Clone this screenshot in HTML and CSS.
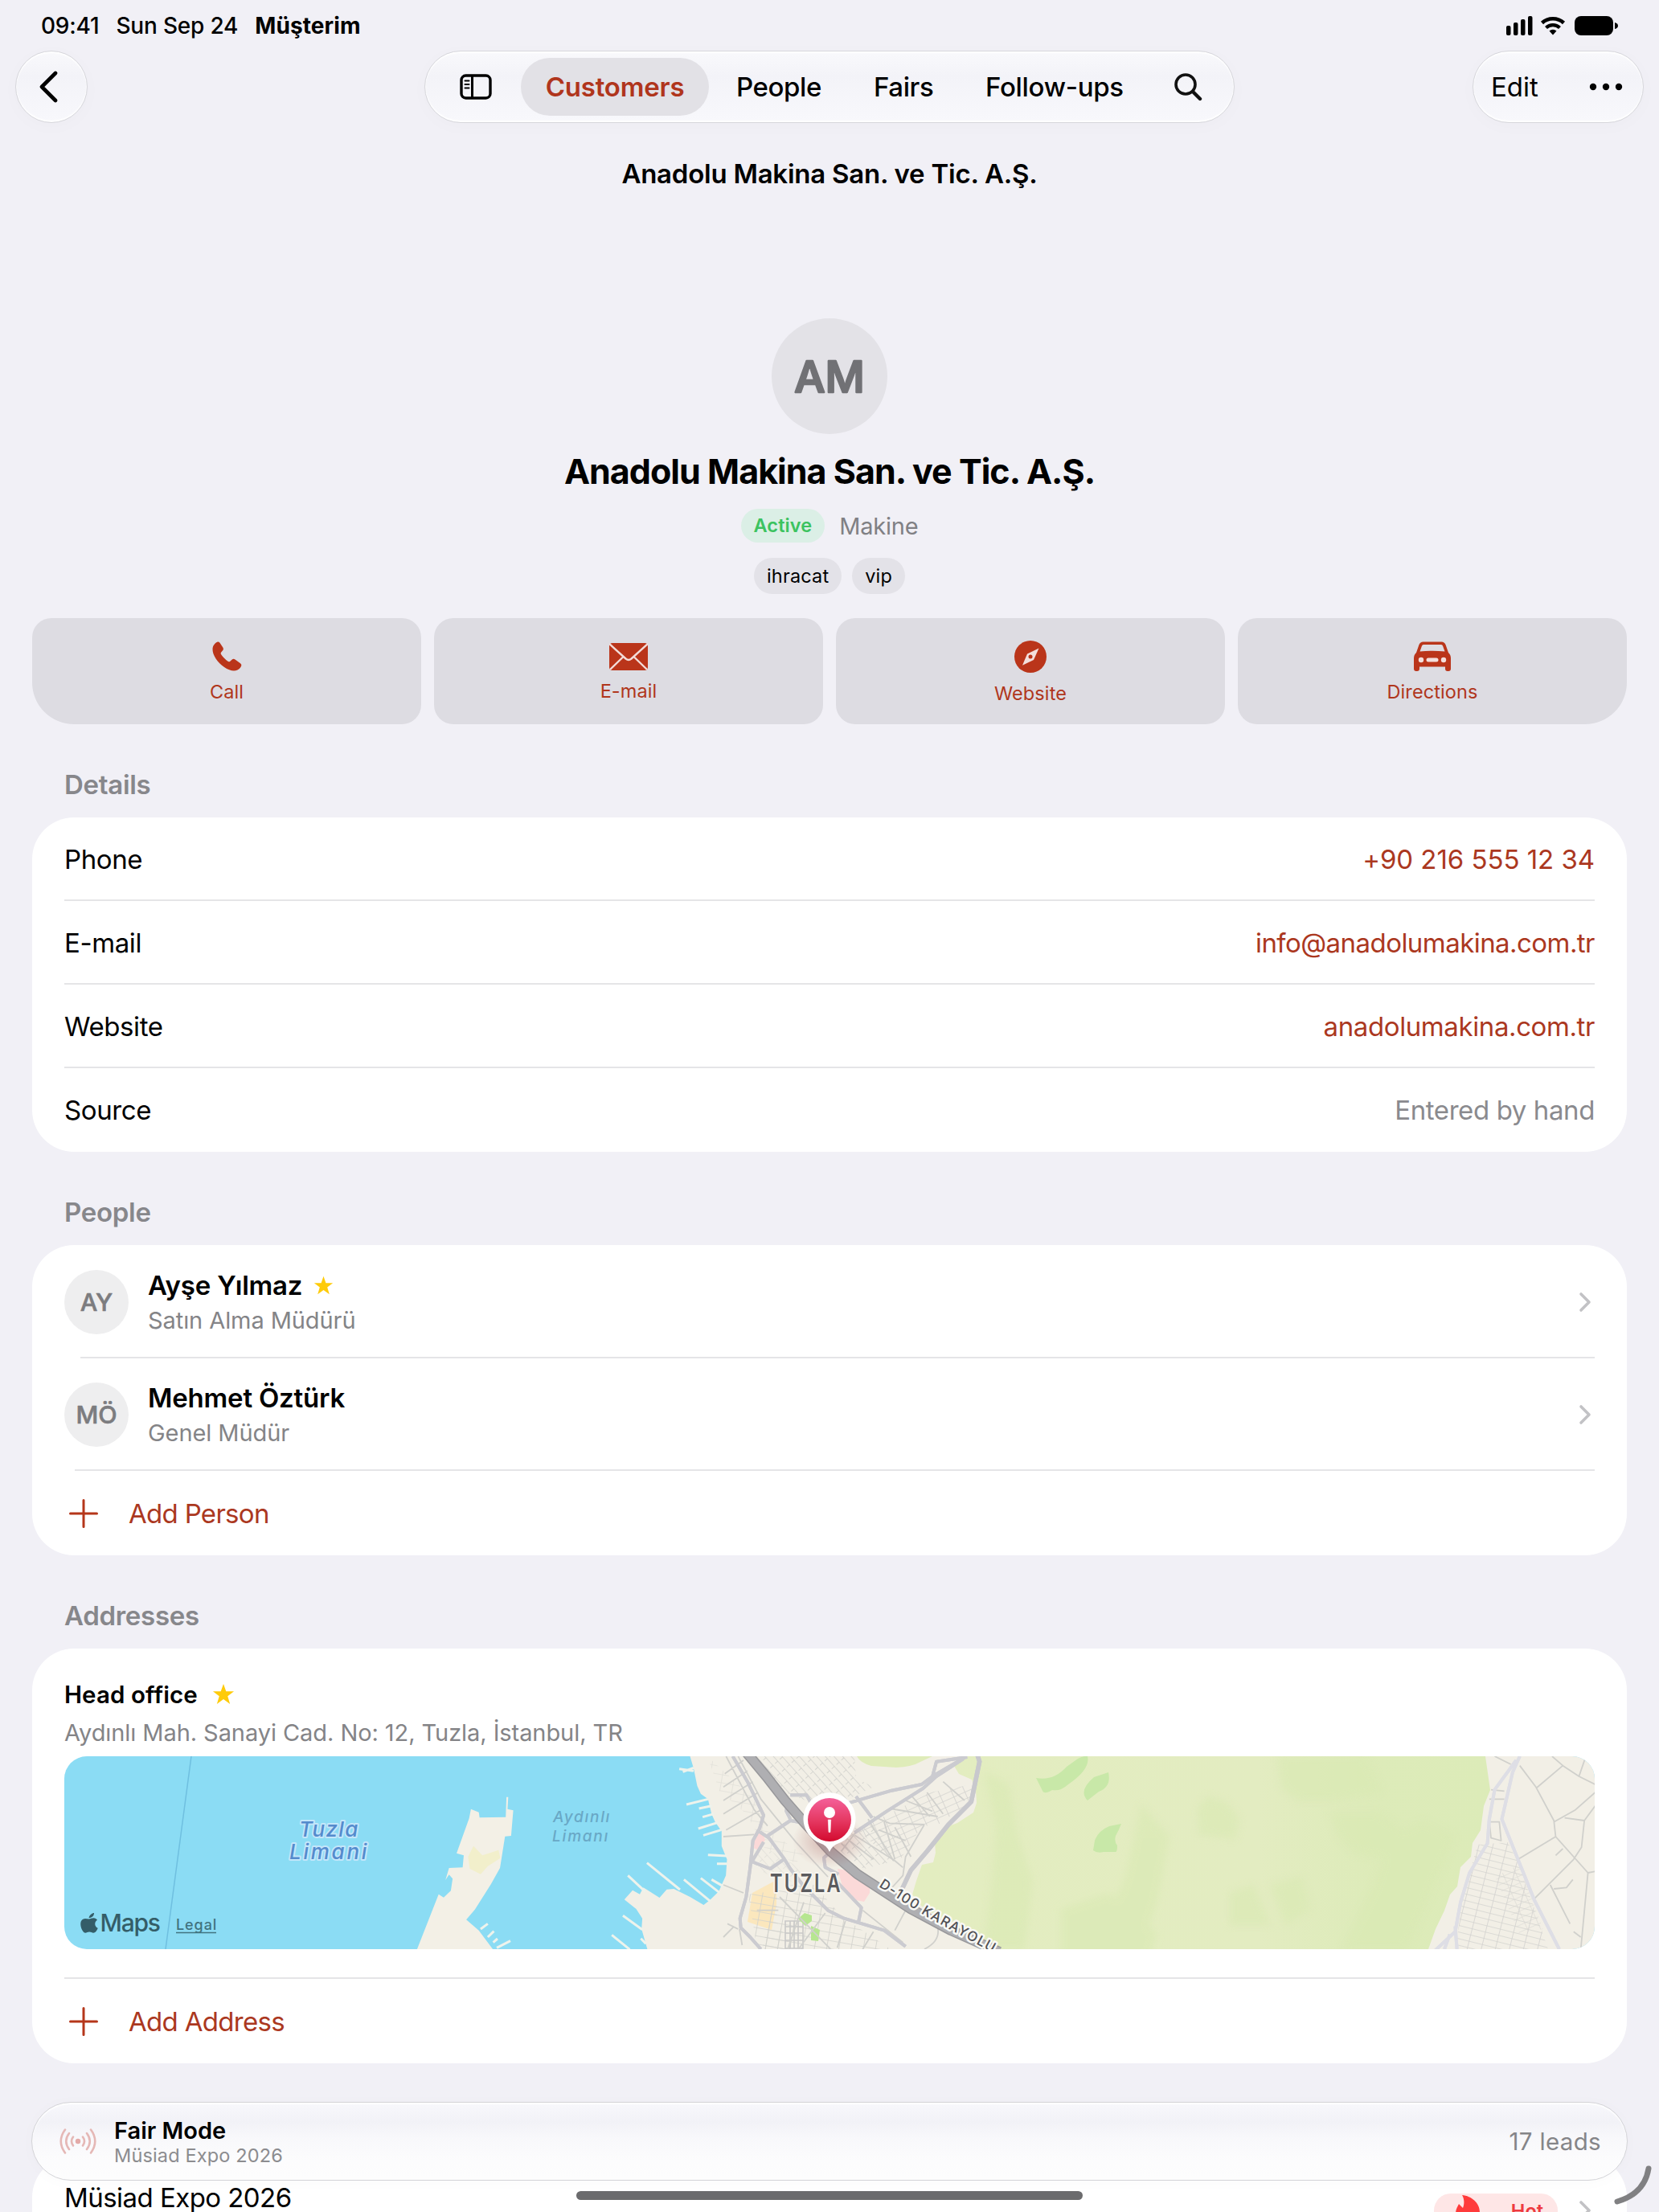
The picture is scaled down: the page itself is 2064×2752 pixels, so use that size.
FILE: index.html
```html
<!DOCTYPE html>
<html lang="en">
<head>
  <meta charset="UTF-8" />
  <meta name="viewport" content="width=device-width, initial-scale=1.0" />
  <title>Müşterim</title>
  <link rel="stylesheet" href="styles.css">
</head>
<body>
<div class="screen">

  <div class="status-bar">
    <span class="time">09:41</span>
    <span class="date">Sun Sep 24</span>
    <span class="app-name">Müşterim</span>
    <svg class="status-icons" width="142" height="26" viewBox="0 0 142 26">
      <rect x="2" y="13" width="5.500" height="12" rx="2"/>
      <rect x="11" y="9" width="5.500" height="16" rx="2"/>
      <rect x="20" y="5" width="5.500" height="20" rx="2"/>
      <rect x="29" y="1" width="5.500" height="24" rx="2"/>
      <path d="M46.500 9.500a20 20 0 0 1 27 0" fill="none" stroke="#000" stroke-width="4.600"/>
      <path d="M51.500 15.500a12.500 12.500 0 0 1 17 0" fill="none" stroke="#000" stroke-width="4.300"/>
      <path d="M60 24.500l-4.500-5a7 7 0 0 1 9 0z"/>
      <rect x="87" y="1" width="48" height="24" rx="8"/>
      <path d="M137 9q4 1 4 4t-4 4z"/>
    </svg>
  </div>

  <div class="nav-bar">
    <button class="glass back-btn">
      <svg width="24" height="40" viewBox="0 0 24 40"><path d="M21 3L4 20l17 17" fill="none" stroke="#000" stroke-width="4.600" stroke-linecap="round" stroke-linejoin="round"/></svg>
    </button>
    <div class="glass tabs">
      <svg class="sidebar-icon" width="40" height="32" viewBox="0 0 40 32">
        <rect x="2" y="2" width="36" height="28" rx="5.500" fill="none" stroke="#000" stroke-width="3.400"/>
        <path d="M15.500 2v28" stroke="#000" stroke-width="3"/>
        <path d="M6.500 8.500h5M6.500 13h5M6.500 17.500h5" stroke="#000" stroke-width="2" stroke-linecap="round"/>
      </svg>
      <span class="tab active-tab">Customers</span>
      <span class="tab tab-people">People</span>
      <span class="tab tab-fairs">Fairs</span>
      <span class="tab tab-follow">Follow-ups</span>
      <svg class="search-icon" width="36" height="36" viewBox="0 0 36 36">
        <circle cx="15" cy="15" r="12" fill="none" stroke="#111" stroke-width="3.600"/>
        <path d="M24 24l9 9" stroke="#111" stroke-width="4.400" stroke-linecap="round"/>
      </svg>
    </div>
    <div class="glass tools">
      <span class="edit">Edit</span>
      <svg width="42" height="10" viewBox="0 0 42 10"><circle cx="5" cy="5" r="4.200"/><circle cx="21" cy="5" r="4.200"/><circle cx="37" cy="5" r="4.200"/></svg>
    </div>
  </div>

  <div class="page-title">Anadolu Makina San. ve Tic. A.Ş.</div>

  <div class="hero">
    <svg class="avatar-big" viewBox="0 0 144 144"><text x="72" y="92" text-anchor="middle">AM</text></svg>
    <h1>Anadolu Makina San. ve Tic. A.Ş.</h1>
    <div class="meta"><span class="badge">Active</span><span class="industry">Makine</span></div>
    <div class="tags"><span class="tag">ihracat</span><span class="tag">vip</span></div>
  </div>

  <div class="actions">
    <div class="action">
      <svg width="48" height="42" viewBox="0 0 48 42"><path d="M13 2.500c-2 .2-6 3.500-6.500 8.500C6 19 13 28.500 21 34c6 4 12 6 16.500 3.500 3-1.500 4.500-4 4.800-5.500.2-1-.3-2-1.300-2.800l-6.500-4.700c-1.500-1-2.800-.8-4 .3l-2.200 2c-.8.7-1.500.7-2.300.2-3-1.800-7.500-6.300-9-9-.5-.9-.4-1.600.2-2.400l1.900-2.300c1-1.200 1-2.600.2-3.900L15.500 3.800c-.7-1-1.500-1.400-2.500-1.300z"/></svg>
      <span>Call</span>
    </div>
    <div class="action mail">
      <svg width="48" height="42" viewBox="0 0 48 42">
        <rect x="0" y="4" width="48" height="34" rx="4"/>
        <path d="M0 5l20.500 18.500q3.500 3 7 0L48 5M1 37l16.500-16M47 37L30.500 21" fill="none" stroke="#f3dcd8" stroke-width="2.400"/>
      </svg>
      <span>E-mail</span>
    </div>
    <div class="action web">
      <svg width="48" height="42" viewBox="0 0 48 42">
        <circle cx="24" cy="21" r="20"/>
        <path d="M34.500 10.500L28 25l-14 6.800L20 17.500z" fill="#f3dfdc"/>
        <circle cx="24" cy="21" r="2.500"/>
      </svg>
      <span>Website</span>
    </div>
    <div class="action">
      <svg width="48" height="42" viewBox="0 0 48 42">
        <path d="M12.500 2.500h23q3.500 0 5 3.500l3.500 10q3 2.500 3 7V36q0 3-3 3h-1q-3 0-3-3v-2.500H8V36q0 3-3 3H4q-3 0-3-3V23q0-4.500 3-7l3.500-10q1.500-3.500 5-3.500z"/>
        <path d="M13 6h22q1.500 0 2 1.500l2.500 7q-15-1.500-31 0l2.500-7Q11.500 6 13 6z" fill="#dfdde3"/>
        <circle cx="10" cy="25" r="3.200" fill="#f3dfdc"/><circle cx="38" cy="25" r="3.200" fill="#f3dfdc"/>
        <rect x="16.500" y="22.500" width="15" height="5" rx="2.500" fill="#f3dfdc"/>
      </svg>
      <span>Directions</span>
    </div>
  </div>

  <h2>Details</h2>
  <div class="card">
    <div class="row"><span>Phone</span><span class="link phone">+90 216 555 12 34</span></div>
    <div class="row"><span>E-mail</span><span class="link email">info@anadolumakina.com.tr</span></div>
    <div class="row"><span>Website</span><span class="link">anadolumakina.com.tr</span></div>
    <div class="row"><span>Source</span><span class="muted">Entered by hand</span></div>
  </div>

  <h2>People</h2>
  <div class="card">
    <div class="row person sep-100">
      <svg class="avatar" viewBox="0 0 80 80"><text x="40" y="51" text-anchor="middle">AY</text></svg>
      <div class="person-text">
        <div class="person-name">Ayşe Yılmaz
          <svg class="star" width="25" height="25" viewBox="0 0 24 24"><path d="M12 .8l2.800 8h8.400l-6.700 5.100 2.500 8.300L12 17.200l-7 5 2.500-8.300L.8 8.800h8.400z"/></svg>
        </div>
        <div class="person-role">Satın Alma Müdürü</div>
      </div>
      <svg class="chevron" width="18" height="28" viewBox="0 0 18 28"><path d="M4 4l10 10L4 24"/></svg>
    </div>
    <div class="row person last-person sep-93">
      <svg class="avatar" viewBox="0 0 80 80"><text x="40" y="51" text-anchor="middle">MÖ</text></svg>
      <div class="person-text">
        <div class="person-name">Mehmet Öztürk</div>
        <div class="person-role">Genel Müdür</div>
      </div>
      <svg class="chevron" width="18" height="28" viewBox="0 0 18 28"><path d="M4 4l10 10L4 24"/></svg>
    </div>
    <div class="row add">
      <svg class="plus" width="36" height="36" viewBox="0 0 36 36"><path d="M18 1.500v33M1.500 18h33"/></svg>
      <span>Add Person</span>
    </div>
  </div>

  <h2>Addresses</h2>
  <div class="card">
    <div class="address">
      <div class="address-name">Head office
        <svg class="star" width="28" height="28" viewBox="0 0 24 24"><path d="M12 .8l2.800 8h8.400l-6.700 5.100 2.500 8.300L12 17.200l-7 5 2.500-8.300L.8 8.800h8.400z"/></svg>
      </div>
      <div class="address-line">Aydınlı Mah. Sanayi Cad. No: 12, Tuzla, İstanbul, TR</div>
      <svg class="map" width="1904" height="240" viewBox="0 0 1904 240">
        <defs>
          <linearGradient id="pinFill" x1="0" y1="0" x2="0" y2="1"><stop offset="0" stop-color="#f4609a"/><stop offset=".5" stop-color="#e63a64"/><stop offset="1" stop-color="#d30a2e"/></linearGradient>
          <radialGradient id="pinGlow"><stop offset="0" stop-color="#a05050" stop-opacity=".4"/><stop offset="1" stop-color="#a05050" stop-opacity="0"/></radialGradient>
          <linearGradient id="forest"><stop offset="0" stop-color="#e3edc0"/><stop offset=".6" stop-color="#e3ecc1"/><stop offset=".8" stop-color="#ddebb9"/><stop offset="1" stop-color="#dcebb8"/></linearGradient>
          <filter id="soft" x="-20%" y="-20%" width="140%" height="140%"><feGaussianBlur stdDeviation="5"/></filter>
          <clipPath id="forestClip"><use href="#forestShape"/></clipPath>
          <pattern id="blocksA" width="13" height="8" patternUnits="userSpaceOnUse" patternTransform="rotate(48)"><path d="M0 0h13M0 0v5" stroke="#d0d0cb" stroke-width="1.700" fill="none"/></pattern>
          <pattern id="blocksB" width="15" height="8" patternUnits="userSpaceOnUse" patternTransform="rotate(-24)"><path d="M0 0h15M0 0v8" stroke="#d4d3cf" stroke-width="1.700" fill="none"/></pattern>
          <pattern id="blocksC" width="15" height="10" patternUnits="userSpaceOnUse" patternTransform="rotate(10)"><path d="M0 0h15M0 0v10" stroke="#d2d2cd" stroke-width="1.700" fill="none"/></pattern>
          <pattern id="blocksE" width="17" height="8" patternUnits="userSpaceOnUse" patternTransform="rotate(14)"><path d="M0 0h17M0 0v8" stroke="#d4d3d0" stroke-width="1.700" fill="none"/></pattern>
          <path id="d100" d="M1013 162L1072 199L1172 254"/>
        </defs>
        <rect width="1904" height="240" fill="#8bdcf4"/>
        <path d="M158 0L126 240" stroke="#6fbfe0" stroke-width="1.500"/>

        <!-- peninsula -->
        <g transform="translate(-20 -145) scale(.44643 .33333)">
          <path d="M1028 1155L1088 950l14 12 20-25 5-45-10-15-10 20 10-45 38-2 3-45-20-8 35-130 5-35 22 12 2 20 73-2 2-75h5l-2 45 16 5-6 95-17 2-14 118-25 60-45 95-24 38 35 40 50 90z" fill="#f3f0e6"/>
          <path d="M1185 770l25 35 45-20 5 30-35 30-20 30-30-20-5-45z" fill="#f2efcb"/>
          <g class="pier"><path d="M1205 1080l20-20M1225 1110l17-22M1240 1130l12-14M1250 1150l38-26"/></g>
        </g>

        <!-- mainland -->
        <g transform="translate(620 -25) scale(.44643 .33333)">
          <path d="M355 75l10 45 10 65 10 30 20 20 10 55 10 30 18 35v55l15 50-3 60-20 60-25 32-17 18-38-30-45-30-20 2-20 31-45-38-10 25-20-15-23 35 33 35 17 35-2 40 16 75h2800V75z" fill="#f2efe6"/>
          <g class="pier"><path d="M325 122l40 8M335 133l30-15M345 255l60-20M380 270l35-10M390 302l32-12M378 345l55-23M392 370l50-20M405 443l53 4M430 476h28M235 473l92 100M182 520l48 60M338 535l74 82M385 530l52 54M415 535l32 25M168 670l54 52M137 742l50 54M218 755l14 20"/></g>
        </g>

        <!-- forest -->
        <path id="forestShape" d="M1122 0L1107 12 1113 22 1129 29 1134 42 1135 58 1131 70 1111 83 1103 86 1088 98 1083 108 1084 120 1081 132 1067 135 1060 155 1055 172 1066 186 1090 202 1125 221 1152 240H1697L1706 215 1717 192 1724 172 1733 162 1737 138 1750 125 1752 108 1762 92 1766 62 1774 42 1768 0z" fill="url(#forest)"/>
        <path d="M986 0q4 8 18 12l31 2q20-1 30-7l15-7z" fill="#dfecb9"/>
        <g clip-path="url(#forestClip)">
          <g class="patches" filter="url(#soft)">
            <path d="M1145 20l30 15 10 60 20 60-10 85h-50l10-90 5-60z"/>
            <path d="M1410 65l12-15 25 8 15 20-5 25-45-5zM1575 70l60 0 30 20-15 40-45-10-20-20zM1510 0h110l20 45-60 10-45 0-20-15zM1450 170l30-10 20 50h-50zM1340 60l35 40-15 80-20 60h-60l40-90zM1500 160l40-10 10 40-30 20zM1240 190l60-20 60 50-10 30h-110z"/>
            <path d="M1650 100l40-20 40 20-60 140h-80l40-80z"/>
          </g>
        </g>
        <path d="M1209 27q22 4 38-14l14-10q8-4 12-3 4 16-24 35-10 9-20 7-10 6-12 1zM1299 20q4 18-12 24l-14 11q-12-12 8-29zM1315 84q-3 8-7 15-2 7 2 12 0 8-2 8h-15q-8 2-13-2l2-12q4-12 18-18z" fill="#c8e8a8"/>

        <!-- built-up areas -->
        <path d="M856 0h127l2 28 22 10-35 17-42 3-30-12z" fill="url(#blocksA)"/>
        <path d="M1020 75l57-30 53-10-4 23-39 27-20 2-30 46-52-42z" fill="url(#blocksB)"/>
        <path d="M980 90l25-5 30 45-40 10-30-22z" fill="url(#blocksA)"/>
        <path d="M800 0l55 50 25 45 40 28-10 10-40-20-20-40-35-30z" fill="url(#blocksC)" opacity=".5"/>
        <path d="M862 108l60 35-10 15-40-12-14-12z" fill="url(#blocksA)" opacity=".5"/>
        <path d="M856 170l30-16v30l-6 32-30-10z" fill="#fbe7bd"/>
        <path d="M851 172l36-5v40l20 33h-45z" fill="url(#blocksC)"/>
        <path d="M888 160l45 0 35 40 60 40H868z" fill="url(#blocksC)"/>
        <path d="M897 205h22v34h-22zM903 205v34M908 205v34M913 205v34M897 212h22M897 220h22M897 229h22" fill="none" stroke="#c9c9c8" stroke-width="1.600"/>
        <path d="M859 96l9-2 4 10-8 13-7-3zM962 140l18 3 22 19 0 8-7 11-15-3-12-16z" fill="#fbd9d8"/>
        <path d="M913 202l8-7 9 3v7l-8 6zM929 211l11 5-2 14-9-1z" fill="#b6e690"/>

        <g class="roads" transform="translate(820 -5) scale(.33333)">
          <path class="street" d="M5 80l70-50M0 130l90-60M0 180l110-70M0 230l130-80M10 290l130-75M0 315l115-8M55 15l85 160 130 160 120 130M10 15l105 200 50 60M0 495l75 30M125 590h80M210 540l190 195M300 560l-60 175M380 600l-100 135M455 630l-30 100M560 670l-40 65M540 250l95 155M490 310l150 95 30 25M600 260l40 140M750 270l-70 120-10 70-45 50M560 240l60 25 130 5M620 210l180 30M680 180l100 40M700 160l70 80M760 150l60 80M820 110l80 70M640 280l60 110M580 290l100 40M470 330l90 70M440 340l60 60M500 290l-60 80M680 590l-40 75M800 655q10 50-50 80M15 640l40 20M60 660l10 60M40 650L0 690M520 590l150 120"/>
          <g class="casing"><use href="#midRoads"/></g>
          <g class="casing wide-casing"><use href="#wideRoads"/></g>
          <path class="mid" id="midRoads" d="M35 15l55 95 60 125-15 50-25 45-10 100-15 110-23 80 3 35 35 35 40 45M160 315l90-60 55 10M125 290l45 30 55 75 25 40 50 65 90 90 60 30 50 15 100 30 80 60M105 408l70 27 50-35M150 335l-45 75M465 190l155-45 120-25 40-30 120-70M490 300l120-80 135-85 50-45 100-65M775 110l20-75 115-17M495 165l60 80M400 372l-25 22 5 36 50 25M420 480l95 100-10 50M240 170l-5 50 15 30M250 160h60l20 35"/>
          <path class="wide" id="wideRoads" d="M948 10l8 25-31 150-85 85-80 100-60 70-35 75"/>
          <path class="motorway-edge" d="M85 0l75 90 70 90 70 80 100 110 100 85 100 65 100 65 150 80 180 80"/>
          <path class="motorway" d="M85 0l75 90 70 90 70 80 100 110 100 85 100 65 100 65 150 80 180 80"/>
        </g>

        <!-- eastern district -->
        <path d="M1758 110l38-3 15 30 35 103h-115l8-60z" fill="url(#blocksE)"/>
        <path d="M1780 150l30-15 30 80-30 5z" fill="url(#blocksB)" opacity=".6"/>
        <g class="roads" transform="translate(1284 -25) scale(.44643 .33333)">
          <path class="street" d="M1110 75l45 30M1180 110l45 80 50 125 5 60 90 135 20-5M1225 195l75-85-30-35M1300 110l45 40 45 30M1345 150l18-70M1275 320l60-45 55-65M1305 305l55 10 30-55M1360 315l-8 100-22 45-108 145M1175 460l105-85M1280 445l20-25M1370 510l-20 285M1265 555l55 145M1275 570l35-5 18-30M1330 730l20 20M1095 235h42M1100 200l37 5M1100 380l-5-60h28l5 70z"/>
          <g class="casing east-casing"><use href="#eastRoads"/></g>
          <path class="east-road" id="eastRoads" d="M1170 90l-60 110-15 110-5 90-50 110-25 110-15 110-60 75M1180 75l-20 60-30 175 90 300 70 185M1000 710l5 85M985 740l-15 55"/>
        </g>

        <g class="sea-label">
          <text x="292" y="100" textLength="73">Tuzla</text>
          <text x="280" y="128" textLength="96">Limani</text>
        </g>
        <g class="bay-label">
          <text x="608" y="82" textLength="70">Aydınlı</text>
          <text x="607" y="106" textLength="69">Limanı</text>
        </g>
        <text class="town-label" x="878" y="169" textLength="90" lengthAdjust="spacingAndGlyphs">TUZLA</text>
        <text class="road-label"><textPath href="#d100">D-100 KARAYOLU</textPath></text>

        <path d="M30.500 201c1-3.500 4-6 6.500-6 .2 3.500-2.800 6.200-6.500 6zM30.500 202.500c2.200 0 3.400-1.200 6-1.200 2 0 3.500 1 4.500 2.400-4 2.500-3.500 8.200.7 10-1 3.200-3.300 6-5.500 6-2 0-2.700-1.100-5-1.100s-3.200 1.100-5 1.100c-4 0-9.300-13.700-3-17 2.800-1.500 5-.2 7.300-.2z" fill="#345d68"/>
        <text class="maps-label" x="44.500" y="218" textLength="75">Maps</text>
        <text class="legal-label" x="139" y="216" textLength="50">Legal</text>
        <path d="M139 219.500h50" stroke="#41737f" stroke-width="1.600"/>

        <ellipse cx="952" cy="105" rx="46" ry="34" fill="url(#pinGlow)"/>
        <path d="M952 119q-3-8-12-11a32.500 32.500 0 1 1 24 0q-9 3-12 11z" fill="#fff"/>
        <circle cx="952" cy="79" r="27" fill="url(#pinFill)"/>
        <circle cx="952" cy="70" r="7" fill="#fff"/>
        <path d="M950.300 79h3.400l-.7 15.500h-2z" fill="#fff" stroke="#fff" stroke-width=".6"/>
      </svg>
    </div>
    <div class="row add">
      <svg class="plus" width="36" height="36" viewBox="0 0 36 36"><path d="M18 1.500v33M1.500 18h33"/></svg>
      <span>Add Address</span>
    </div>
  </div>

  <div class="card fairs">
    <div class="row fair">
      <span>Müsiad Expo 2026</span>
      <span class="hot">
        <svg width="34" height="38" viewBox="0 0 34 38"><path d="M10 0c12 1 22 10 22 21 0 9-6 16-15 16S2 31 2 23c0-5 2-8 4-12l5 5c2-5 2-11-1-16z"/></svg>
        Hot
      </span>
      <svg class="chevron" width="18" height="28" viewBox="0 0 18 28"><path d="M4 4l10 10L4 24"/></svg>
    </div>
  </div>

  <!-- floating bar over the list -->
  <div class="fair-bar">
    <svg width="46" height="32" viewBox="0 0 46 32">
      <circle cx="23" cy="16" r="3.200"/>
      <path d="M17 10.500q-4 5.500 0 11M29 10.500q4 5.500 0 11M12 6q-7.500 10 0 20M34 6q7.500 10 0 20M7 1.500q-10.500 14.500 0 29M39 1.500q10.500 14.500 0 29"/>
    </svg>
    <div class="fair-text">
      <div class="fair-title">Fair Mode</div>
      <div class="fair-sub">Müsiad Expo 2026</div>
    </div>
    <span class="leads">17 leads</span>
  </div>
  <div class="home-indicator"></div>
  <svg class="resize-handle" width="56" height="56" viewBox="0 0 56 56"><path d="M47 7Q42 38 8 48"/></svg>
</div>
</body>
</html>
```
FILE: styles.css
```css
body {
  margin: 0;
  background: #f1f0f6;
  color: #000;
  font-family: Inter, "Liberation Sans", sans-serif;
}

.screen {
  position: relative;
  width: 2064px;
  height: 2752px;
  overflow: hidden;
  font-size: 33px;
  letter-spacing: -0.4px;
}

svg {
  display: block;
  flex: none;
}

/* status bar */
.status-bar {
  display: flex;
  align-items: center;
  height: 63px;
  padding: 1px 50px 0 51px;
  box-sizing: border-box;
  font-size: 28px;
  font-weight: 500;
  letter-spacing: -0.2px;
  white-space: nowrap;
}

.date {
  margin-left: 21px;
}

.app-name {
  margin-left: 21px;
  font-weight: 700;
  letter-spacing: 0.1px;
}

.status-icons {
  margin-left: auto;
}

/* top navigation */
.nav-bar {
  display: flex;
  justify-content: space-between;
  height: 90px;
  padding: 0 19px;
}

.glass {
  display: flex;
  align-items: center;
  box-sizing: border-box;
  height: 90px;
  border: 1px solid #d6d6db;
  border-radius: 45px;
  background: linear-gradient(#f9f9fc, #f3f3f8 35%, #f8f8fc);
  box-shadow: inset 0 2px 2px #fff, inset 0 -2px 2px #fff, 0 4px 24px rgba(0, 0, 0, 0.02);
}

.back-btn {
  width: 90px;
  padding: 0 0 0 28px;
  margin-right: 123px;
}

.tabs {
  width: 1008px;
  padding-left: 43px;
  font-weight: 500;
}

.tab {
  white-space: nowrap;
}

.active-tab {
  width: 234px;
  margin-left: 36px;
  line-height: 72px;
  border-radius: 36px;
  background: #e2e1e6;
  color: #b0351c;
  font-weight: 600;
  letter-spacing: -0.2px;
  text-align: center;
}

.tab-people {
  margin-left: 34px;
  width: 171px;
}

.tab-fairs {
  width: 139px;
}

.tab-follow {
  width: 234px;
  letter-spacing: -0.3px;
}

.tools {
  width: 213px;
  padding: 0 25px 0 22px;
  justify-content: space-between;
  letter-spacing: 0;
}

.page-title {
  margin-top: 43px;
  line-height: 40px;
  font-weight: 600;
  letter-spacing: -0.24px;
  text-align: center;
}

/* customer summary */
.hero {
  display: flex;
  flex-direction: column;
  align-items: center;
  margin-top: 160px;
}

.avatar-big {
  width: 144px;
  height: 144px;
  border-radius: 50%;
  background: #e3e2e7;
}

.avatar-big text {
  font-size: 54px;
  font-weight: 500;
  letter-spacing: 0;
  fill: #717175;
  stroke: #717175;
  stroke-width: 2.4px;
  stroke-linejoin: round;
}

h1 {
  margin: 19px 0 0;
  font-size: 43px;
  line-height: 54px;
  font-weight: 700;
  letter-spacing: -0.97px;
}

.meta {
  display: flex;
  align-items: center;
  gap: 18px;
  height: 42px;
  margin-top: 20px;
}

.badge {
  padding: 0 16px;
  border-radius: 21px;
  line-height: 42px;
  font-size: 23.5px;
  font-weight: 600;
  letter-spacing: 0.1px;
  background: #dbefe6;
  color: #3cc360;
}

.industry {
  font-size: 29px;
  letter-spacing: -0.2px;
  color: #808084;
}

.tags {
  display: flex;
  gap: 13px;
  margin-top: 19px;
}

.tag {
  padding: 0 16px;
  border-radius: 23px;
  line-height: 45px;
  font-size: 23.5px;
  letter-spacing: 0.15px;
  background: #e3e2e8;
}

/* quick actions */
.actions {
  display: grid;
  grid-template-columns: repeat(4, 1fr);
  gap: 16px;
  margin: 30px 40px 0;
}

.action {
  display: flex;
  flex-direction: column;
  align-items: center;
  height: 132px;
  padding-top: 27px;
  box-sizing: border-box;
  border-radius: 24px;
  background: #dddce2;
  color: #b0361c;
  fill: #ba351a;
  font-size: 23.5px;
  letter-spacing: 0.1px;
}

.action span {
  margin-top: 7px;
  line-height: 32px;
}

.mail span {
  margin-top: 6px;
}

.web span {
  margin-top: 9px;
}

.action:first-child {
  border-bottom-left-radius: 52px;
}

.action:last-child {
  border-bottom-right-radius: 52px;
}

/* grouped list */
h2 {
  margin: 0;
  padding: 58px 0 24px 80px;
  line-height: 34px;
  font-size: 33px;
  font-weight: 600;
  letter-spacing: -0.3px;
  color: #87878b;
}

.card {
  margin: 0 40px;
  border-radius: 52px;
  background: #fff;
}

.row {
  display: flex;
  align-items: center;
  justify-content: space-between;
  height: 104px;
  margin: 0 40px;
  box-sizing: border-box;
  background: linear-gradient(#e5e5e7, #e5e5e7) 0 100% / 100% 2px no-repeat;
}

.row:last-child {
  background: none;
}

.link {
  color: #ab381f;
}

.phone {
  letter-spacing: -0.05px;
}

.email {
  letter-spacing: -0.55px;
}

.muted {
  color: #8a8a8e;
}

.person {
  height: 141px;
  justify-content: flex-start;
}

.last-person {
  height: 140px;
}

.sep-100 {
  background-position: 20px 100%;
}

.sep-93 {
  background-position: 13px 100%;
}

.avatar {
  width: 80px;
  height: 80px;
  border-radius: 50%;
  background: #eeeeef;
}

.avatar text {
  font-size: 30.5px;
  font-weight: 500;
  letter-spacing: 0;
  fill: #7c7c7f;
  stroke: #7c7c7f;
  stroke-width: 0.6px;
  stroke-linejoin: round;
}

.person-text {
  margin-left: 24px;
  padding-top: 2px;
  line-height: 43px;
}

.person-name {
  display: flex;
  align-items: center;
  gap: 14px;
  font-weight: 600;
  letter-spacing: -0.2px;
}

.person-role {
  font-size: 29px;
  letter-spacing: -0.08px;
  color: #848487;
}

.star {
  fill: #fecb0a;
}

.chevron {
  margin-left: auto;
  margin-right: 3px;
  fill: none;
  stroke: #c2c2c5;
  stroke-width: 3.6px;
  stroke-linecap: round;
  stroke-linejoin: round;
}

.add {
  height: 105px;
  justify-content: flex-start;
  letter-spacing: -0.7px;
  color: #ab381f;
}

.plus {
  margin: 0 38px 0 6px;
  fill: none;
  stroke: #b5361a;
  stroke-width: 3px;
  stroke-linecap: round;
}

.address {
  height: 411px;
  padding: 33px 0 0;
  margin: 0 40px;
  box-sizing: border-box;
  line-height: 48px;
  font-size: 29px;
  background: linear-gradient(#e5e5e7, #e5e5e7) 0 100% / 100% 2px no-repeat;
}

.address-name {
  display: flex;
  align-items: center;
  gap: 18px;
  font-size: 29.5px;
  font-weight: 600;
  letter-spacing: 0.1px;
}

.address-line {
  letter-spacing: -0.07px;
  color: #848487;
}

/* map */
.map {
  margin-top: 5px;
  border-radius: 28px;
}

.map path {
  vector-effect: non-scaling-stroke;
}

.patches {
  fill: #d9e9b3;
  opacity: 0.6;
}

.pier path {
  fill: none;
  stroke: #eef3ec;
  stroke-width: 3px;
}

.roads path {
  fill: none;
  stroke-linejoin: round;
}

.roads .street {
  stroke: #d0d0cc;
  stroke-width: 1.8px;
}

/* roads inherit their stroke so that <use> can redraw them as a casing */
.casing {
  stroke: #b4b4ba;
  stroke-width: 6px;
}

.wide-casing {
  stroke-width: 8px;
}

.east-casing {
  stroke: #c9c9d1;
  stroke-width: 6px;
}

.roads > .mid {
  stroke: #cbcbd0;
  stroke-width: 4px;
}

.roads > .wide {
  stroke: #c8c8cd;
  stroke-width: 5.5px;
}

.roads > .east-road {
  stroke: #dedee5;
  stroke-width: 4px;
}

.roads .motorway-edge {
  stroke: #98989b;
  stroke-width: 13px;
}

.roads .motorway {
  stroke: #afafb2;
  stroke-width: 10px;
}

.map text {
  paint-order: stroke;
  stroke-linejoin: round;
}

.sea-label {
  font-size: 26px;
  font-style: italic;
  font-weight: 500;
  fill: #548bcd;
  stroke: #c3e6fa;
  stroke-width: 4px;
}

.bay-label {
  font-size: 19px;
  font-style: italic;
  font-weight: 500;
  fill: #69a8c6;
}

.town-label {
  font-size: 31px;
  font-weight: 600;
  fill: #5b5b5e;
  stroke: #f8f6f0;
  stroke-width: 4px;
  letter-spacing: 3px;
}

.road-label {
  font-size: 17px;
  font-weight: 500;
  letter-spacing: 1.4px;
  fill: #505054;
  stroke: #f8f8f4;
  stroke-width: 5px;
}

.maps-label {
  font-size: 30px;
  font-weight: 500;
  fill: #345d68;
}

.legal-label {
  font-size: 18px;
  font-weight: 500;
  fill: #41737f;
}

/* last card, partly under the floating bar */
.fairs {
  margin-top: 115px;
  height: 160px;
}

.fair {
  letter-spacing: -0.55px;
}

.hot {
  display: flex;
  align-items: center;
  gap: 37px;
  height: 42px;
  margin-left: auto;
  margin-right: 25px;
  margin-top: 32px;
  padding: 0 18px 0 25px;
  border-radius: 21px;
  background: #fee6e6;
  color: #ee3a3f;
  fill: #ff3b3b;
  font-size: 23.5px;
  font-weight: 600;
  letter-spacing: 0;
}

.fair .chevron {
  margin-left: 0;
  margin-top: 32px;
}

.fair-bar {
  position: absolute;
  left: 39px;
  top: 2615px;
  width: 1986px;
  height: 98px;
  display: flex;
  align-items: center;
  box-sizing: border-box;
  padding: 0 32px 0 34px;
  border: 1px solid #d3d3d7;
  border-radius: 49px;
  background: linear-gradient(#f8f8fc, #f2f2f7 25%, #f8f8fb 45%, #fcfcfd 75%, #fdfdfd);
  box-shadow: inset 0 2px 2px #fff, 0 2px 20px rgba(0, 0, 0, 0.02);
}

.fair-bar svg {
  fill: #e3aaa8;
}

.fair-bar path {
  fill: none;
  stroke: #e5b8b6;
  stroke-width: 2.6px;
  stroke-linecap: round;
}

.fair-text {
  margin-left: 22px;
  padding-top: 2px;
}

.fair-title {
  font-size: 29px;
  line-height: 33px;
  font-weight: 600;
  letter-spacing: 0;
}

.fair-sub {
  font-size: 23.5px;
  line-height: 30px;
  letter-spacing: 0.15px;
  color: #8c8c8f;
}

.leads {
  margin-left: auto;
  font-size: 29.5px;
  letter-spacing: 0.35px;
  color: #858588;
}

.home-indicator {
  position: absolute;
  left: 717px;
  top: 2726px;
  width: 630px;
  height: 11px;
  border-radius: 6px;
  background: #6b6b6d;
}

.resize-handle {
  position: absolute;
  left: 2004px;
  top: 2691px;
  fill: none;
  stroke: #808082;
  stroke-width: 7px;
  stroke-linecap: round;
}
```
